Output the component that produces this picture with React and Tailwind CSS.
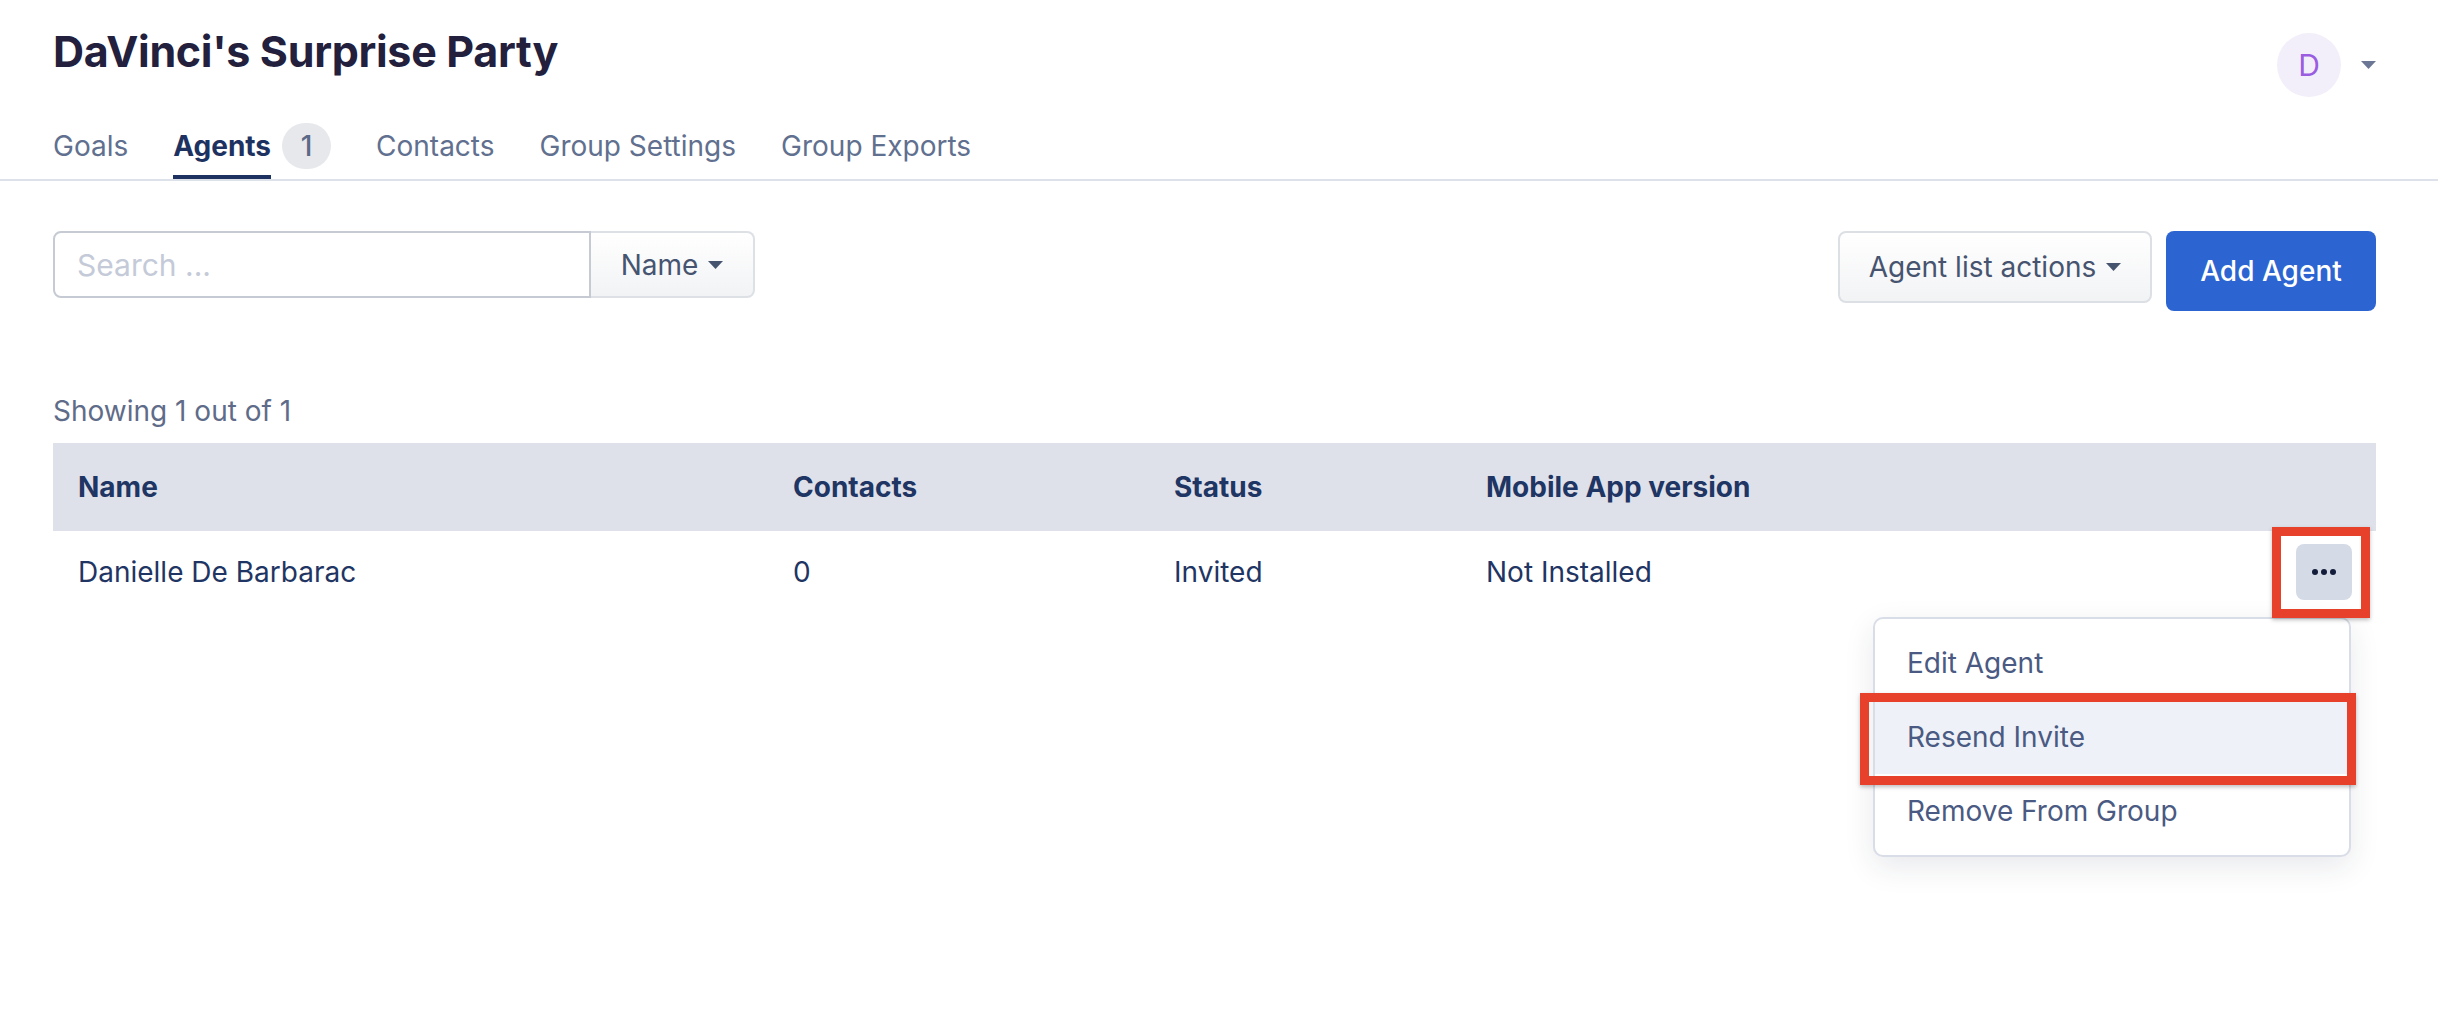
import React from 'react';

function Caret({ className }) {
  return (
    <svg width="15" height="8" viewBox="0 0 15 8" className={className}>
      <path d="M0 0h15L7.5 8z" fill="currentColor" />
    </svg>
  );
}

function Dots() {
  return (
    <svg width="24" height="6" viewBox="0 0 24 6">
      <circle cx="3" cy="3" r="3" fill="#131d3b" />
      <circle cx="12" cy="3" r="3" fill="#131d3b" />
      <circle cx="21" cy="3" r="3" fill="#131d3b" />
    </svg>
  );
}

const tabs = ['Contacts', 'Group Settings', 'Group Exports'];

const menuItems = [
  { label: 'Edit Agent' },
  { label: 'Resend Invite', active: true },
  { label: 'Remove From Group' },
];

export default function App() {
  return (
    <div className="relative min-h-[1018px] bg-white font-[Inter,sans-serif] text-[28px] leading-[40px]">
      {/* Header */}
      <header className="flex justify-between border-b-2 border-[#dde1ea] pl-[53px] pr-[62px]">
        <div className="pt-[26px]">
          <h1 className="text-[43px] font-bold leading-[51px] tracking-[-0.3px] text-[#22203d]">
            DaVinci's Surprise Party
          </h1>
          <nav className="mt-[46px] flex items-start gap-[45px]">
            <a className="flex h-[46px] items-center text-[#61708f]">Goals</a>
            <div className="flex items-start gap-[11px]">
              <div className="flex flex-col">
                <span className="flex h-[46px] items-center font-bold text-[#1e3261]">Agents</span>
                <span className="mt-[6px] h-[4px] bg-[#1e3261]" />
              </div>
              <span className="flex h-[46px] w-[49px] items-center justify-center rounded-full bg-[#e6e8ec] font-medium text-[#5b6a87]">
                1
              </span>
            </div>
            {tabs.map((t) => (
              <a key={t} className="flex h-[46px] items-center text-[#61708f]">
                {t}
              </a>
            ))}
          </nav>
        </div>
        <div className="flex items-center gap-[20px] self-start pt-[33px]">
          <div className="flex h-[64px] w-[64px] items-center justify-center rounded-full bg-[#f3effa] text-[30px] text-[#9a5ce0]">
            D
          </div>
          <Caret className="text-[#6b7795]" />
        </div>
      </header>

      {/* Toolbar */}
      <div className="mt-[50px] flex items-start justify-between pl-[53px] pr-[62px]">
        <div className="flex">
          <input
            placeholder="Search ..."
            className="h-[67px] w-[538px] rounded-l-[8px] border-2 border-[#c5cad3] px-[22px] text-[30px] text-[#465470] outline-none placeholder:text-[#c4cad8]"
          />
          <button className="flex h-[67px] w-[164px] items-center justify-center gap-[10px] rounded-r-[8px] border-2 border-l-0 border-[#dde0e5] bg-linear-to-b from-white to-[#f2f3f5] text-[#465470]">
            Name
            <Caret />
          </button>
        </div>
        <div className="flex items-start gap-[14px]">
          <button className="flex h-[72px] w-[314px] items-center justify-center gap-[10px] rounded-[8px] border-2 border-[#dcdfe4] bg-linear-to-b from-white to-[#f2f3f5] text-[#465470]">
            Agent list actions
            <Caret />
          </button>
          <button className="flex h-[80px] w-[210px] items-center justify-center rounded-[8px] bg-[#2c64d1] font-medium text-white">
            Add Agent
          </button>
        </div>
      </div>

      <p className="mt-[80px] pl-[53px] text-[#5f6c89]">Showing 1 out of 1</p>

      {/* Table */}
      <div className="mt-[12px] ml-[53px] mr-[62px]">
        <div className="grid h-[88px] grid-cols-[715px_381px_312px_1fr] items-center bg-[#dee1ea] font-bold text-[#1f3563]">
          <div className="pl-[25px]">Name</div>
          <div className="pl-[25px]">Contacts</div>
          <div className="pl-[25px]">Status</div>
          <div className="pl-[25px]">Mobile App version</div>
        </div>
        <div className="grid h-[82px] grid-cols-[715px_381px_312px_1fr_auto] items-center text-[#1f3563]">
          <div className="pl-[25px]">Danielle De Barbarac</div>
          <div className="pl-[25px]">0</div>
          <div className="pl-[25px]">Invited</div>
          <div className="pl-[25px]">Not Installed</div>
          <div className="pr-[24px]">
            <div className="relative">
              <button className="flex h-[56px] w-[56px] items-center justify-center rounded-[8px] bg-[#d5dbe6]">
                <Dots />
              </button>
              <div className="absolute right-[1px] top-[73px] w-[478px] rounded-[10px] border-2 border-[#d8dde7] bg-white py-[7px] shadow-[0_10px_30px_rgba(30,40,70,0.10)]">
                {menuItems.map((m) => (
                  <div
                    key={m.label}
                    className={`flex h-[74px] items-center pl-[32px] text-[#4a5a82] ${m.active ? 'bg-[#eef1f8]' : ''}`}
                  >
                    {m.label}
                  </div>
                ))}
              </div>
            </div>
          </div>
        </div>
      </div>

      {/* Annotation boxes */}
      <div className="absolute left-[2272px] top-[527px] h-[91px] w-[98px] border-[9px] border-[#e8412b] shadow-[0_2px_4px_rgba(0,0,0,0.25)]" />
      <div className="absolute left-[1860px] top-[693px] h-[92px] w-[496px] border-[9px] border-[#e8412b] shadow-[0_2px_4px_rgba(0,0,0,0.25)]" />
    </div>
  );
}
